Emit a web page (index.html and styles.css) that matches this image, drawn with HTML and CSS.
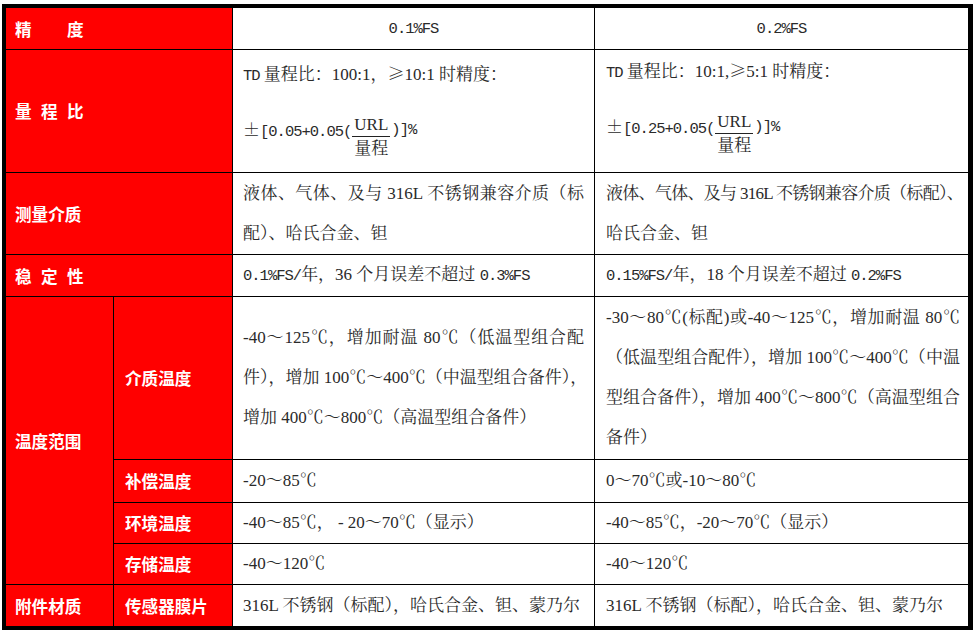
FILE: index.html
```html
<!DOCTYPE html>
<html lang="zh-CN">
<head>
<meta charset="utf-8">
<title>技术参数</title>
<link rel="stylesheet" href="styles.css">
</head>
<body>
<table class="spec">
  <colgroup>
    <col class="w1"><col class="w2"><col class="w3"><col class="w4">
  </colgroup>
  <tr class="h-head">
    <th colspan="2" class="lab"><span class="ls2">精度</span></th>
    <td class="c hc"><span class="m">0.1%FS</span></td>
    <td class="c c3 hc"><span class="m">0.2%FS</span></td>
  </tr>
  <tr class="h-range">
    <th colspan="2" class="lab"><span class="ls1">量程比</span></th>
    <td class="c top">
      <div class="ln"><span class="m">TD</span> 量程比：100:1，<span class="cj">≥</span>10:1 时精度：</div>
      <div class="f">
        <span class="ft"><span class="cj">±</span><span class="m">[0.05+0.05(</span></span>
        <span class="frac"><span class="num">URL</span><span class="den">量程</span></span>
        <span class="ft"><span class="m">)]%</span></span>
      </div>
    </td>
    <td class="c c3 top">
      <div class="ln"><span class="m">TD</span> 量程比：10:1,<span class="cj">≥</span>5:1 时精度：</div>
      <div class="f">
        <span class="ft"><span class="cj">±</span><span class="m">[0.25+0.05(</span></span>
        <span class="frac"><span class="num">URL</span><span class="den">量程</span></span>
        <span class="ft"><span class="m">)]%</span></span>
      </div>
    </td>
  </tr>
  <tr class="h-media">
    <th colspan="2" class="lab">测量介质</th>
    <td class="c">
      <div class="j">液体、气体、及与 316L 不锈钢兼容介质（标</div>
      <div class="nw">配）、哈氏合金、钽</div>
    </td>
    <td class="c c3">
      <div class="nw tight">液体、气体、及与 316L 不锈钢兼容介质（标配）、</div>
      <div class="nw">哈氏合金、钽</div>
    </td>
  </tr>
  <tr class="h-stab">
    <th colspan="2" class="lab"><span class="ls1">稳定性</span></th>
    <td class="c nw"><span class="m">0.1%FS/</span>年，36 个月误差不超过 <span class="m">0.3%FS</span></td>
    <td class="c c3 nw"><span class="m">0.15%FS/</span>年，18 个月误差不超过 <span class="m">0.2%FS</span></td>
  </tr>
  <tr class="h-medtemp">
    <th rowspan="4" class="lab">温度范围</th>
    <th class="lab sub">介质温度</th>
    <td class="c">
      <div class="j">-40～125℃，增加耐温 80℃（低温型组合配</div>
      <div class="j">件），增加 100℃～400℃（中温型组合备件），</div>
      <div class="nw">增加 400℃～800℃（高温型组合备件）</div>
    </td>
    <td class="c c3">
      <div class="j">-30～80℃(标配)或-40～125℃，增加耐温 80℃</div>
      <div class="j">（低温型组合配件），增加 100℃～400℃（中温</div>
      <div class="j">型组合备件），增加 400℃～800℃（高温型组合</div>
      <div class="nw">备件）</div>
    </td>
  </tr>
  <tr class="h-comp">
    <th class="lab sub">补偿温度</th>
    <td class="c nw">-20～85℃</td>
    <td class="c c3 nw">0～70℃或-10～80℃</td>
  </tr>
  <tr class="h-env">
    <th class="lab sub">环境温度</th>
    <td class="c nw">-40～85℃， - 20～70℃（显示）</td>
    <td class="c c3 nw">-40～85℃，-20～70℃（显示）</td>
  </tr>
  <tr class="h-store">
    <th class="lab sub">存储温度</th>
    <td class="c nw">-40～120℃</td>
    <td class="c c3 nw">-40～120℃</td>
  </tr>
  <tr class="h-mat last">
    <th class="lab">附件材质</th>
    <th class="lab sub">传感器膜片</th>
    <td class="c nw">316L 不锈钢（标配），哈氏合金、钽、蒙乃尔</td>
    <td class="c c3 nw">316L 不锈钢（标配），哈氏合金、钽、蒙乃尔</td>
  </tr>
</table>
</body>
</html>
```
FILE: styles.css
```css
html, body {
  margin: 0;
  padding: 0;
  background: #ffffff;
}

.spec {
  border-collapse: separate;
  border-spacing: 0;
  table-layout: fixed;
  width: 971px;
  margin: 4px 0 0 2px;
  border: 4px solid #000;
  border-right-width: 5px;
}

.w1 { width: 108px; }
.w2 { width: 119px; }
.w3 { width: 362px; }
.w4 { width: 373px; }

.spec th,
.spec td {
  padding: 0;
  border-right: 1px solid #000;
  border-bottom: 1px solid #000;
  vertical-align: middle;
  overflow: hidden;
}

.spec .c3 { border-right: 0; }
.spec tr.last th,
.spec tr.last td { border-bottom: 0; }

.h-head { height: 42px; }
.h-range { height: 123px; }
.h-media { height: 82px; }
.h-stab { height: 42px; }
.h-medtemp { height: 163px; }
.h-comp { height: 43px; }
.h-env { height: 41px; }
.h-store { height: 41px; }
.h-mat { height: 41px; }

.lab {
  background: #ff0000;
  color: #ffffff;
  font-family: "Noto Sans CJK SC", sans-serif;
  font-weight: 700;
  font-size: 16.6px;
  line-height: 20px;
  text-align: left;
  padding-left: 9px !important;
  white-space: nowrap;
}

.lab.sub { padding-left: 11px !important; }

.ls1 { letter-spacing: 9.4px; }
.ls2 { letter-spacing: 35.4px; }

.c {
  font-family: "Liberation Serif", "Noto Serif CJK SC", "Noto Sans CJK SC", serif;
  font-size: 17px;
  line-height: 40px;
  color: #2a2a2a;
  text-align: left;
  padding: 0 10px !important;
}

.c.c3 { padding: 0 4px 0 11px !important; }
.c3 .j { margin-right: 4px; }

.nw { white-space: nowrap; }
.tight { letter-spacing: -0.7px; }

.hc { text-align: center; }
.c.hc { padding: 0 !important; }

.top { vertical-align: top !important; padding-top: 3px !important; }

.m {
  font-family: "Liberation Mono", monospace;
  font-size: 15.5px;
  letter-spacing: -1px;
}

.cj {
  font-family: "Noto Serif CJK SC", "Noto Sans CJK SC", serif;
}

.j {
  white-space: nowrap;
  text-align: justify;
  text-align-last: justify;
}

.f {
  display: flex;
  align-items: flex-start;
  margin-top: 16px;
  line-height: 22px;
}

.ft {
  line-height: 22px;
  padding-top: 6px;
  white-space: nowrap;
}

.frac {
  display: flex;
  flex-direction: column;
  align-items: center;
  margin: 2px 1px 0;
}

.num {
  font-family: "Liberation Serif", serif;
  font-size: 17px;
  line-height: 22px;
  padding: 0 2px;
  border-bottom: 1px solid #222;
}

.den {
  line-height: 24px;
}
```
